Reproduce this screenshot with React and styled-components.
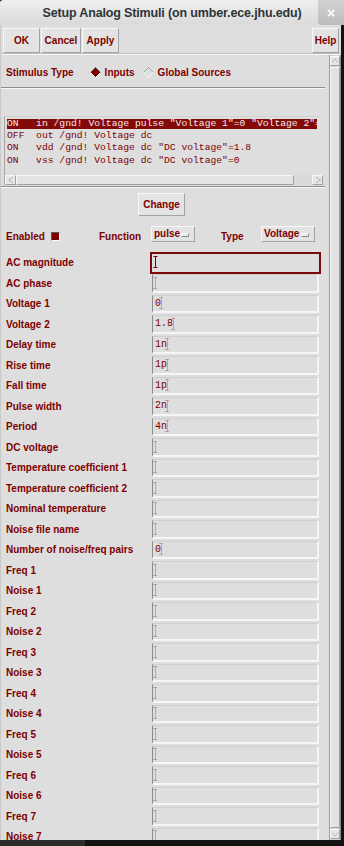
import React from "react"
import styled, { createGlobalStyle, css } from "styled-components"

const MAROON = "#7d0000"
const BG = "#dedede"
const MONO = `"Liberation Mono", "DejaVu Sans Mono", monospace`

const GlobalStyle = createGlobalStyle`
  html, body {
    margin: 0;
    padding: 0;
    background: #121212;
  }
  body {
    font-family: "Liberation Sans", Arial, sans-serif;
  }
`

const Screen = styled.div`
  width: 344px;
  height: 846px;
  overflow: hidden;
  background: #121212;
  display: flex;
  flex-direction: column;
`

const TitleBar = styled.div`
  flex: none;
  height: 25px;
  display: flex;
  align-items: stretch;
  background: linear-gradient(#efefef, #dadada);
  box-sizing: border-box;
  border-top-left-radius: 3px;
`
const Title = styled.div`
  flex: 1;
  padding-left: 26px;
  display: flex;
  align-items: center;
  justify-content: center;
  font-size: 12.5px;
  font-weight: 700;
  color: #2e3436;
  letter-spacing: -0.15px;
`
const CloseButton = styled.div`
  width: 26px;
  display: flex;
  align-items: center;
  justify-content: center;
  background: linear-gradient(#d2d2d2, #bcbcbc);
  border-bottom-left-radius: 4px;
  color: #ffffff;
  font-size: 14px;
  font-weight: 700;
`

const Frame = styled.div`
  width: 341px;
  height: 815px;
  flex: none;
  background: ${BG};
  display: flex;
  flex-direction: column;
  box-sizing: border-box;
  border-left: 1px solid #c9c9c9;
`

const Toolbar = styled.div`
  flex: none;
  height: 30px;
  box-sizing: border-box;
  display: flex;
  align-items: flex-start;
  padding: 3px 1px 0 2px;
  border-bottom: 1px solid #f4f4f4;
  box-shadow: inset 0 -1px 0 #c0c0c0;
`

const bevel = css`
  box-sizing: border-box;
  background: #e3e3e3;
  border: 1px solid;
  border-color: #f8f8f8 #a2a2a2 #a2a2a2 #f8f8f8;
`

const ToolButton = styled.div`
  ${bevel};
  width: ${p => p.$w}px;
  height: 25px;
  margin-right: 1px;
  margin-left: ${p => (p.$push ? "auto" : "0")};
  display: flex;
  align-items: center;
  justify-content: center;
  font-size: 10px;
  font-weight: 700;
  color: ${MAROON};
`

const Body = styled.div`
  flex: 1;
  min-height: 0;
  display: flex;
`

const Main = styled.div`
  flex: 1;
  min-width: 0;
  overflow: hidden;
  display: flex;
  flex-direction: column;
  padding-right: 4px;
`

const Label = styled.span`
  font-size: 10px;
  font-weight: 700;
  color: ${MAROON};
  white-space: nowrap;
`

const StimulusRow = styled.div`
  flex: none;
  height: 32px;
  box-sizing: border-box;
  padding: 2px 0 0 5px;
  display: flex;
  align-items: center;
`
const RadioOption = styled.div`
  display: flex;
  align-items: center;
  gap: 4px;
  margin-left: ${p => p.$gap}px;
`

const Separator = styled.div`
  flex: none;
  height: 0;
  border-top: 1px solid #8d8d8d;
  border-bottom: 1px solid #f8f8f8;
  margin-top: ${p => p.$top || 0}px;
`

const ListFrame = styled.div`
  flex: none;
  width: 319px;
  margin: 27px 0 0 3px;
  box-sizing: border-box;
  border-left: 1px solid #a6a6a6;
  border-top: 1px solid #d2d2d2;
  padding-top: 1px;
`
const ListRows = styled.div`
  width: 311px;
  height: 57px;
  margin-left: 1px;
  overflow: hidden;
`
const ListRow = styled.div`
  height: 12.2px;
  box-sizing: border-box;
  padding: 1px 0 1px 1px;
  background-clip: content-box;
  background-color: ${p => (p.$selected ? "#840a0a" : "transparent")};
  color: ${p => (p.$selected ? "#f6e6e6" : MAROON)};
  font-family: ${MONO};
  font-size: 9.7px;
  line-height: 10.2px;
  white-space: pre;
`

const HScroll = styled.div`
  height: 10px;
  display: flex;
  align-items: stretch;
  background: #d9d9d9;
`
const ArrowBox = styled.div`
  ${bevel};
  width: ${p => p.$w || 11}px;
  height: ${p => p.$h || 10}px;
  flex: none;
  display: flex;
  align-items: center;
  justify-content: center;
  background: #e6e6e6;
`
const HThumb = styled.div`
  ${bevel};
  width: 278px;
  background: #e4e4e4;
`
const HTrack = styled.div`
  flex: 1;
`

const VScroll = styled.div`
  width: 12px;
  flex: none;
  box-sizing: border-box;
  border-left: 1px solid #9a9a9a;
  border-right: 1px solid #8a8a8a;
  display: flex;
  flex-direction: column;
  padding: 1px 0 1px 0;
  background: #d4d4d4;
`
const VThumb = styled.div`
  flex: 1;
  margin: 1px 0;
  ${bevel};
  background: #e2e2e2;
`

const ChangeRow = styled.div`
  flex: none;
  display: flex;
  justify-content: center;
  padding-right: 3px;
  margin-top: 5px;
`
const ChangeButton = styled(ToolButton)`
  height: 23px;
  margin: 0;
`

const OptionsRow = styled.div`
  flex: none;
  height: 20px;
  margin-top: 10px;
  padding-left: 5px;
  display: grid;
  grid-template-columns: 45px 48px 52px 70px 40px auto;
  align-items: center;
  justify-items: start;
`
const CheckBox = styled.span`
  width: 9px;
  height: 9px;
  box-sizing: border-box;
  background: ${MAROON};
  border: 1px solid;
  border-color: #5a5a5a #f8f8f8 #f8f8f8 #5a5a5a;
  margin-top: 1px;
`
const OptionMenu = styled.div`
  ${bevel};
  align-self: start;
  width: ${p => p.$w}px;
  height: 16px;
  display: flex;
  align-items: flex-start;
  justify-content: space-between;
  padding: 1px 5px 0 2px;
  font-size: 10px;
  font-weight: 700;
  color: ${MAROON};
  line-height: 11px;
`
const MenuMark = styled.span`
  width: 8px;
  height: 4px;
  margin-top: 5px;
  box-sizing: border-box;
  background: #ececec;
  border: 1px solid;
  border-color: #fafafa #8e8e8e #8e8e8e #fafafa;
`

const Form = styled.div`
  margin-top: 6.7px;
  display: flex;
  flex-direction: column;
`
const FormRow = styled.div`
  flex: none;
  height: 20.5px;
  padding-left: 5px;
  display: grid;
  grid-template-columns: 146px 167px;
  align-items: center;
`
const Field = styled.div`
  align-self: start;
  margin-top: 1px;
  height: 18.5px;
  box-sizing: border-box;
  border-left: 1px solid #8c8c8c;
  border-top: 1px solid #cfcfcf;
  border-right: 2px solid #f6f6f6;
  border-bottom: 2px solid #f6f6f6;
  padding-left: 2px;
  display: flex;
  align-items: center;
  font-family: ${MONO};
  font-size: 10px;
  color: ${MAROON};
  white-space: pre;
  ${p =>
    p.$focused &&
    css`
      outline: 2px solid #7a0a0a;
      border-color: transparent;
    `}
`

const BottomStrip = styled.div`
  flex: 1;
  display: flex;
`
const TaskSegment = styled.div`
  width: 85px;
  background: #2c2c2c;
`

const Diamond = ({ checked }) => (
  <svg width="11" height="11" viewBox="0 0 11 11">
    <polygon points="5.5,0.5 10.5,5.5 5.5,10.5 0.5,5.5" fill={checked ? "#7a0000" : BG} />
    <polyline points="0.5,5.5 5.5,0.5 10.5,5.5" fill="none" stroke={checked ? "#5a5a5a" : "#a8a8a8"} />
    <polyline points="0.5,5.5 5.5,10.5 10.5,5.5" fill="none" stroke="#fafafa" />
  </svg>
)

const Caret = ({ solid }) => (
  <svg width="5" height="12" viewBox="0 0 5 12" style={{ marginLeft: -2, flex: "none" }}>
    <path
      d="M0.5 0.5H4.5M2.5 0.5V11.5M0.5 11.5H4.5"
      fill="none"
      stroke={solid ? "#7a0000" : "#a86a6a"}
      strokeDasharray={solid ? "none" : "1 1"}
    />
  </svg>
)

const Arrow = ({ dir }) => {
  const pts = {
    left: "6,1 1.5,4 6,7",
    right: "2,1 6.5,4 2,7",
    up: "1,6 4.5,1.5 8,6",
    down: "1,2 4.5,6.5 8,2",
  }[dir]
  const size = dir === "left" || dir === "right" ? [8, 8] : [9, 8]
  return (
    <svg width={size[0]} height={size[1]} viewBox={`0 0 ${size[0]} ${size[1]}`}>
      <polyline points={pts} fill="none" stroke="#b4b4b4" />
    </svg>
  )
}

const stimuli = [
  { text: 'ON   in /gnd! Voltage pulse "Voltage 1"=0 "Voltage 2"=1.8', selected: true },
  { text: "OFF  out /gnd! Voltage dc" },
  { text: 'ON   vdd /gnd! Voltage dc "DC voltage"=1.8' },
  { text: 'ON   vss /gnd! Voltage dc "DC voltage"=0' },
]

const fields = [
  ["AC magnitude", "", true],
  ["AC phase", ""],
  ["Voltage 1", "0"],
  ["Voltage 2", "1.8"],
  ["Delay time", "1n"],
  ["Rise time", "1p"],
  ["Fall time", "1p"],
  ["Pulse width", "2n"],
  ["Period", "4n"],
  ["DC voltage", ""],
  ["Temperature coefficient 1", ""],
  ["Temperature coefficient 2", ""],
  ["Nominal temperature", ""],
  ["Noise file name", ""],
  ["Number of noise/freq pairs", "0"],
  ["Freq 1", ""],
  ["Noise 1", ""],
  ["Freq 2", ""],
  ["Noise 2", ""],
  ["Freq 3", ""],
  ["Noise 3", ""],
  ["Freq 4", ""],
  ["Noise 4", ""],
  ["Freq 5", ""],
  ["Noise 5", ""],
  ["Freq 6", ""],
  ["Noise 6", ""],
  ["Freq 7", ""],
  ["Noise 7", ""],
]

export default function App() {
  return (
    <Screen>
      <GlobalStyle />
      <TitleBar>
        <Title>Setup Analog Stimuli (on umber.ece.jhu.edu)</Title>
        <CloseButton>×</CloseButton>
      </TitleBar>
      <Frame>
        <Toolbar>
          <ToolButton $w={37}>OK</ToolButton>
          <ToolButton $w={40}>Cancel</ToolButton>
          <ToolButton $w={37}>Apply</ToolButton>
          <ToolButton $w={27} $push>Help</ToolButton>
        </Toolbar>
        <Body>
          <Main>
            <StimulusRow>
              <Label>Stimulus Type</Label>
              <RadioOption $gap={16}>
                <Diamond checked />
                <Label>Inputs</Label>
              </RadioOption>
              <RadioOption $gap={8}>
                <Diamond />
                <Label>Global Sources</Label>
              </RadioOption>
            </StimulusRow>
            <Separator />
            <ListFrame>
              <ListRows>
                {stimuli.map(s => (
                  <ListRow key={s.text} $selected={s.selected}>
                    {s.text}
                  </ListRow>
                ))}
              </ListRows>
              <HScroll>
                <ArrowBox>
                  <Arrow dir="left" />
                </ArrowBox>
                <HThumb />
                <HTrack />
                <ArrowBox>
                  <Arrow dir="right" />
                </ArrowBox>
              </HScroll>
            </ListFrame>
            <Separator $top={1} />
            <ChangeRow>
              <ChangeButton $w={47}>Change</ChangeButton>
            </ChangeRow>
            <OptionsRow>
              <Label>Enabled</Label>
              <CheckBox />
              <Label>Function</Label>
              <OptionMenu $w={44}>
                pulse
                <MenuMark />
              </OptionMenu>
              <Label>Type</Label>
              <OptionMenu $w={54}>
                Voltage
                <MenuMark />
              </OptionMenu>
            </OptionsRow>
            <Form>
              {fields.map(([name, value, focused]) => (
                <FormRow key={name}>
                  <Label>{name}</Label>
                  <Field $focused={focused}>
                    {value}
                    <Caret solid={focused} />
                  </Field>
                </FormRow>
              ))}
            </Form>
          </Main>
          <VScroll>
            <ArrowBox $w={10} $h={10}>
              <Arrow dir="up" />
            </ArrowBox>
            <VThumb />
            <ArrowBox $w={10} $h={10}>
              <Arrow dir="down" />
            </ArrowBox>
          </VScroll>
        </Body>
      </Frame>
      <BottomStrip>
        <TaskSegment />
      </BottomStrip>
    </Screen>
  )
}
